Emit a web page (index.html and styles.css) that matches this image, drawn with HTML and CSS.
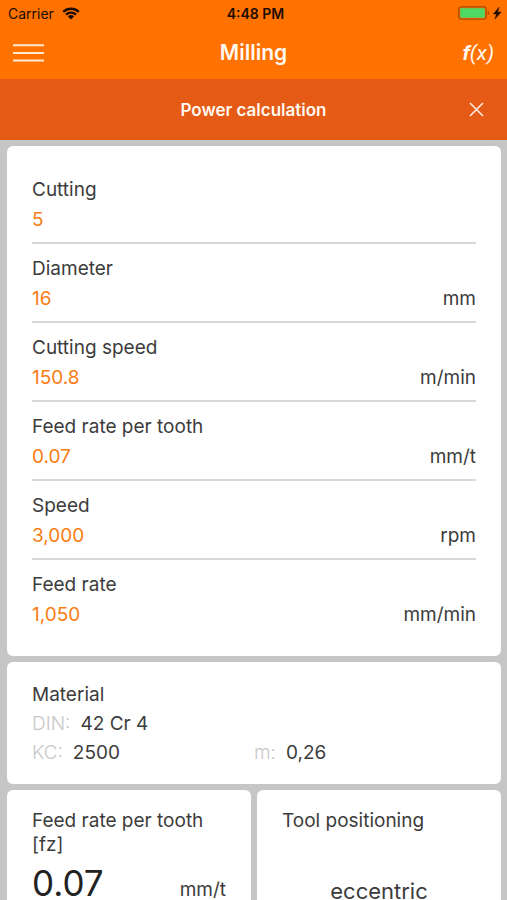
FILE: index.html
```html
<!DOCTYPE html>
<html lang="en">
<head>
<meta charset="utf-8">
<meta name="viewport" content="width=device-width, initial-scale=1">
<title>Milling</title>
<link rel="stylesheet" href="styles.css">
</head>
<body>
<header class="top">
  <div class="status">
    <div class="carrier">
      <span>Carrier</span>
      <svg width="18" height="13" viewBox="0 0 18 13" aria-hidden="true">
        <path d="M1.2 4.9a11.2 11.2 0 0 1 15.6 0M4 7.7a7.2 7.2 0 0 1 10 0" fill="none" stroke="#1c0d00" stroke-width="2.3"/>
        <path d="M5.9 9.4a4.4 4.4 0 0 1 6.2 0L9 12.6z" fill="#1c0d00"/>
      </svg>
    </div>
    <time class="clock">4:48 PM</time>
    <div class="power">
      <svg width="45" height="15" viewBox="0 0 45 15" aria-hidden="true">
        <rect x=".8" y=".8" width="27.4" height="12.4" rx="2.6" fill="none" stroke="#a84b00" stroke-width="1.3"/>
        <rect x="2.2" y="2.2" width="24.6" height="9.6" rx="1.2" fill="#4cd964"/>
        <path d="M29.8 5v4.2q1.6-.7 1.6-2.1T29.8 5z" fill="#a84b00"/>
        <path d="M41 1.2L35.4 8h3.2l-1.7 5 6.3-7h-3.6z" fill="#1c0d00" stroke="#1c0d00" stroke-width=".5"/>
      </svg>
    </div>
  </div>
  <div class="nav">
    <button class="icon-button" type="button" aria-label="Menu">
      <svg width="31" height="20" viewBox="0 0 31 20" aria-hidden="true"><path d="M0 2.3h31M0 10h31M0 17.5h31" stroke="#ffe9d0" stroke-width="2.1"/></svg>
    </button>
    <h1 class="title">Milling</h1>
    <button class="icon-button formula" type="button"><b>f</b>(x)</button>
  </div>
</header>
<div class="subheader">
  <h2 class="subtitle">Power calculation</h2>
  <button class="icon-button close" type="button" aria-label="Close">
    <svg width="15" height="15" viewBox="0 0 15 15" aria-hidden="true"><path d="M1 1l13 13M14 1L1 14" stroke="#fff0e4" stroke-width="1.5"/></svg>
  </button>
</div>
<main class="content">
  <form class="card fields">
    <div class="field"><label for="cutting">Cutting</label><div class="entry"><input id="cutting" value="5"></div></div>
    <div class="field"><label for="diameter">Diameter</label><div class="entry"><input id="diameter" value="16"><span>mm</span></div></div>
    <div class="field"><label for="cutting-speed">Cutting speed</label><div class="entry"><input id="cutting-speed" value="150.8"><span>m/min</span></div></div>
    <div class="field"><label for="tooth-feed">Feed rate per tooth</label><div class="entry"><input id="tooth-feed" value="0.07"><span>mm/t</span></div></div>
    <div class="field"><label for="speed">Speed</label><div class="entry"><input id="speed" value="3,000"><span>rpm</span></div></div>
    <div class="field"><label for="feed">Feed rate</label><div class="entry"><input id="feed" value="1,050"><span>mm/min</span></div></div>
  </form>
  <section class="card material">
    <h3 class="heading">Material</h3>
    <div class="properties"><p><span class="key">DIN:</span>42 Cr 4</p></div>
    <div class="properties"><p><span class="key">KC:</span>2500</p><p><span class="key">m:</span>0,26</p></div>
  </section>
  <div class="results">
    <section class="card result">
      <h3 class="heading">Feed rate per tooth [fz]</h3>
      <p class="reading"><span class="number">0.07</span><span>mm/t</span></p>
    </section>
    <section class="card result">
      <h3 class="heading">Tool positioning</h3>
      <p class="choice">eccentric</p>
    </section>
  </div>
</main>
</body>
</html>
```

FILE: styles.css
```css
* { box-sizing: border-box; }

html { scrollbar-width: none; }

body {
  margin: 0;
  background: #c6c6c6;
  color: #3c3c3c;
  font-family: Inter, "Liberation Sans", sans-serif;
  font-size: 19px;
  line-height: 30px;
}

h1, h2, h3, p { margin: 0; font-weight: 400; font-size: inherit; }

svg { display: block; }

.top { background: #ff7200; }

.status {
  display: grid;
  grid-template-columns: 1fr auto 1fr;
  align-items: center;
  height: 27px;
  padding: 0 4px 0 8px;
  color: #1c0d00;
  font-size: 14px;
  line-height: 20px;
}

.carrier { display: flex; align-items: center; gap: 8px; }

.clock { font-weight: 600; }

.power { justify-self: end; }

.nav, .subheader {
  display: grid;
  grid-template-columns: 1fr auto 1fr;
  align-items: center;
  padding: 0 13px;
  color: #fff8f0;
}

.nav { height: 52px; }

.title { font-size: 21px; font-weight: 600; }

.icon-button {
  justify-self: start;
  padding: 0;
  border: 0;
  background: none;
  color: inherit;
  font: inherit;
  cursor: pointer;
}

.formula {
  justify-self: end;
  font-family: Roboto, "Open Sans", sans-serif;
  font-size: 21px;
  font-style: italic;
  font-weight: 400;
}

.formula b { font-weight: 700; }

.subheader {
  height: 61px;
  padding: 0 23px;
  background: #e55a14;
}

.subtitle { grid-column: 2; font-size: 17px; font-weight: 600; }

.close { justify-self: end; }

.content {
  display: flex;
  flex-direction: column;
  gap: 6px;
  padding: 6px 6px 6px 7px;
}

.card {
  padding: 18px 25px 17px;
  border-radius: 6px;
  background: #fff;
}

.field {
  padding: 10px 0 7px;
  border-bottom: 2px solid #d8d8d8;
}

.field:first-child { padding-top: 11px; }
.field:last-child { padding-bottom: 9px; border-bottom: 0; }
.field label { display: block; }

.entry { display: flex; min-height: 30px; }

.entry input {
  flex: 1;
  min-width: 0;
  height: 30px;
  padding: 0;
  border: 0;
  outline: 0;
  background: none;
  color: #f97c14;
  font: inherit;
}

.material { line-height: 29px; }

.properties { display: grid; grid-template-columns: 1fr 1fr; }

.key { margin-right: 10px; color: #c8c8c8; font-weight: 300; }

.results {
  display: grid;
  grid-template-columns: 1fr 1fr;
  gap: 6px;
}

.result { padding-top: 19px; }

.result .heading { line-height: 24px; }

.reading {
  display: flex;
  align-items: baseline;
  justify-content: space-between;
  line-height: 52px;
}

.number { color: #222; font-size: 35px; }

.choice {
  padding-top: 43px;
  font-size: 22px;
  text-align: center;
}
```
